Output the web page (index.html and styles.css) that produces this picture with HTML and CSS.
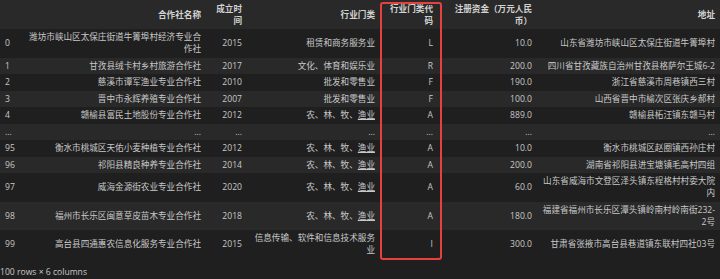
FILE: index.html
```html
<!DOCTYPE html>
<html lang="zh">
<head>
<meta charset="utf-8">
<link rel="stylesheet" href="styles.css">
</head>
<body>
<div class="output">
  <table class="df">
    <colgroup>
      <col class="c-idx"><col class="c-name"><col class="c-year"><col class="c-ind"><col class="c-code"><col class="c-cap"><col class="c-addr">
    </colgroup>
    <thead>
      <tr><th></th><th>合作社名称</th><th>成立时间</th><th>行业门类</th><th>行业门类代码</th><th>注册资金（万元人民币）</th><th>地址</th></tr>
    </thead>
    <tbody>
      <tr><th>0</th><td>潍坊市峡山区太保庄街道牛箐埠村经济专业合作社</td><td>2015</td><td>租赁和商务服务业</td><td>L</td><td>10.0</td><td>山东省潍坊市峡山区太保庄街道牛箐埠村</td></tr>
      <tr><th>1</th><td>甘孜县绒卡村乡村旅游合作社</td><td>2017</td><td>文化、体育和娱乐业</td><td>R</td><td>200.0</td><td>四川省甘孜藏族自治州甘孜县格萨尔王城6-2</td></tr>
      <tr><th>2</th><td>慈溪市谭军渔业专业合作社</td><td>2010</td><td>批发和零售业</td><td>F</td><td>190.0</td><td>浙江省慈溪市周巷镇西三村</td></tr>
      <tr><th>3</th><td>晋中市永辉养殖专业合作社</td><td>2007</td><td>批发和零售业</td><td>F</td><td>100.0</td><td>山西省晋中市榆次区张庆乡郝村</td></tr>
      <tr><th>4</th><td>赣榆县富民土地股份专业合作社</td><td>2012</td><td>农、林、牧、<span class="ul">渔业</span></td><td>A</td><td>889.0</td><td>赣榆县柘汪镇东赣马村</td></tr>
      <tr><th>...</th><td>...</td><td>...</td><td>...</td><td>...</td><td>...</td><td>...</td></tr>
      <tr><th>95</th><td>衡水市桃城区天佑小麦种植专业合作社</td><td>2012</td><td>农、林、牧、<span class="ul">渔业</span></td><td>A</td><td>10.0</td><td>衡水市桃城区赵圈镇西孙庄村</td></tr>
      <tr><th>96</th><td>祁阳县精良种养专业合作社</td><td>2014</td><td>农、林、牧、<span class="ul">渔业</span></td><td>A</td><td>200.0</td><td>湖南省祁阳县进宝塘镇毛高村四组</td></tr>
      <tr><th>97</th><td>威海金源街农业专业合作社</td><td>2020</td><td>农、林、牧、<span class="ul">渔业</span></td><td>A</td><td>60.0</td><td>山东省威海市文登区泽头镇东程格村村委大院内</td></tr>
      <tr><th>98</th><td>福州市长乐区闽意草皮苗木专业合作社</td><td>2018</td><td>农、林、牧、<span class="ul">渔业</span></td><td>A</td><td>180.0</td><td>福建省福州市长乐区潭头镇岭南村岭南街232-2号</td></tr>
      <tr><th>99</th><td>高台县四通惠农信息化服务专业合作社</td><td>2015</td><td>信息传输、软件和信息技术服务业</td><td>I</td><td>300.0</td><td>甘肃省张掖市高台县巷道镇东联村四社03号</td></tr>
    </tbody>
  </table>
  <p class="shape">100 rows × 6 columns</p>
  <div class="highlight"></div>
</div>
</body>
</html>
```
FILE: styles.css
```css
html, body {
  margin: 0;
  padding: 0;
  background: #1f1f1f;
}
body {
  font-family: "Open Sans", "Noto Sans CJK SC", sans-serif;
  font-size: 8.6px;
  line-height: 12px;
  color: #c8c8c8;
}
.output {
  position: relative;
  width: 720px;
}
.df {
  width: 720px;
  table-layout: fixed;
  border-collapse: collapse;
  border-spacing: 0;
}
.c-idx { width: 22px; }
.c-name { width: 184px; }
.c-year { width: 41px; }
.c-ind { width: 133px; }
.c-code { width: 58px; }
.c-cap { width: 99px; }
.c-addr { width: 183px; }
.df th, .df td {
  padding: 2.25px 5px;
  text-align: right;
  vertical-align: middle;
  font-size: 8.6px;
  line-height: 12px;
}
.df thead th {
  font-weight: bold;
  color: #d2d2d2;
  background: #292929;
  padding-top: 2.5px;
  padding-bottom: 2.5px;
}
.df tbody th {
  text-align: left;
  font-weight: normal;
}
.df tbody tr:nth-child(even) {
  background: #292929;
}
.ul {
  text-decoration: underline;
  text-decoration-thickness: 0.5px;
  text-underline-offset: 1px;
}
.shape {
  margin: 8.5px 0 0 0;
  font-size: 8.6px;
  line-height: 10px;
  color: #c8c8c8;
}
.highlight {
  position: absolute;
  left: 380px;
  top: 2px;
  width: 62px;
  height: 258px;
  box-sizing: border-box;
  border: 2px solid #e8403f;
  border-radius: 3px;
}
```
